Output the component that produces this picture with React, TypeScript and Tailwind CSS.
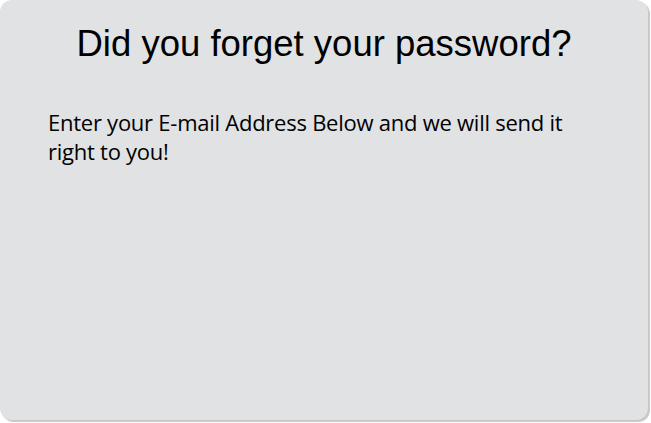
export default function App() {
  return (
    <div className="w-[651px] h-[423px] bg-white">
      <div className="w-[648px] h-[420px] rounded-[12px] bg-[#e1e2e4] shadow-[2px_2px_1px_rgba(0,0,0,0.22)] flex flex-col">
        <h1
          className="text-[36.5px] leading-none text-black text-center pt-[26px]"
          style={{ fontFamily: '"Liberation Sans", Arial, sans-serif' }}
        >
          Did you forget your password?
        </h1>
        <p
          className="mt-[45px] pl-[48px] pr-[60px] text-[22px] leading-[29px] text-black tracking-[-0.25px]"
          style={{ fontFamily: '"Open Sans", "Noto Sans", sans-serif' }}
        >
          Enter your E-mail Address Below and we will send it right to you!
        </p>
      </div>
    </div>
  );
}
